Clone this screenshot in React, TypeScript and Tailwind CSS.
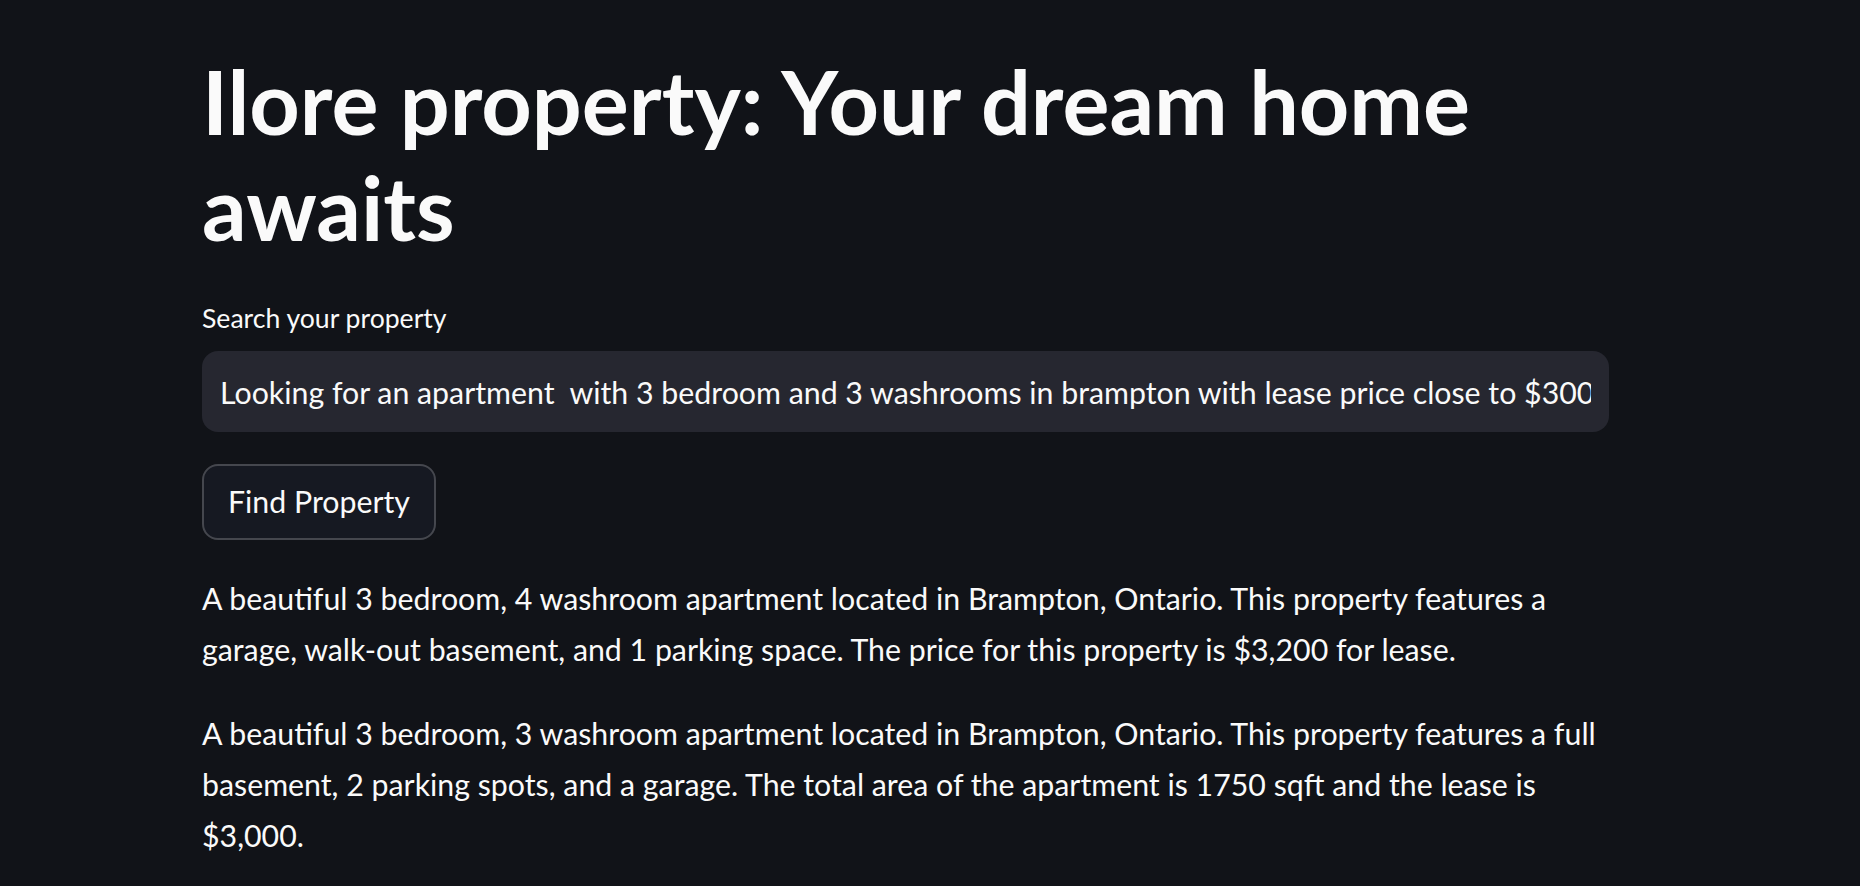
const listings = [
  "A beautiful 3 bedroom, 4 washroom apartment located in Brampton, Ontario. This property features a garage, walk-out basement, and 1 parking space. The price for this property is $3,200 for lease.",
  "A beautiful 3 bedroom, 3 washroom apartment located in Brampton, Ontario. This property features a full basement, 2 parking spots, and a garage. The total area of the apartment is 1750 sqft and the lease is $3,000.",
];

export default function App() {
  return (
    <div className="min-h-screen bg-[#111318] text-[#fafafa] font-['Lato',sans-serif]">
      <main className="pl-[202px] pt-[49px]">
        <div className="w-[1407px] flex flex-col">
          <h1 className="text-[88px] font-bold leading-[105.6px]">
            Ilore property: Your dream home awaits
          </h1>

          <label htmlFor="search" className="mt-[38px] block text-[26.6px] leading-[40px]">
            Search your property
          </label>
          <input
            id="search"
            readOnly
            defaultValue="Looking for an apartment  with 3 bedroom and 3 washrooms in brampton with lease price close to $3000"
            className="mt-[13px] h-[81px] w-full rounded-[16px] bg-[#262730] px-[18px] text-[30.3px] text-[#fafafa] outline-none whitespace-pre"
          />

          <div className="mt-[32px]">
            <button className="h-[76px] w-[234px] rounded-[16px] border-2 border-[#45474e] bg-[#161922] text-[30.3px] text-[#fafafa]">
              Find Property
            </button>
          </div>

          <div className="mt-[33px] flex flex-col gap-[32px]">
            {listings.map((text) => (
              <p key={text} className="text-[30.3px] leading-[51.2px]">
                {text}
              </p>
            ))}
          </div>
        </div>
      </main>
    </div>
  );
}
